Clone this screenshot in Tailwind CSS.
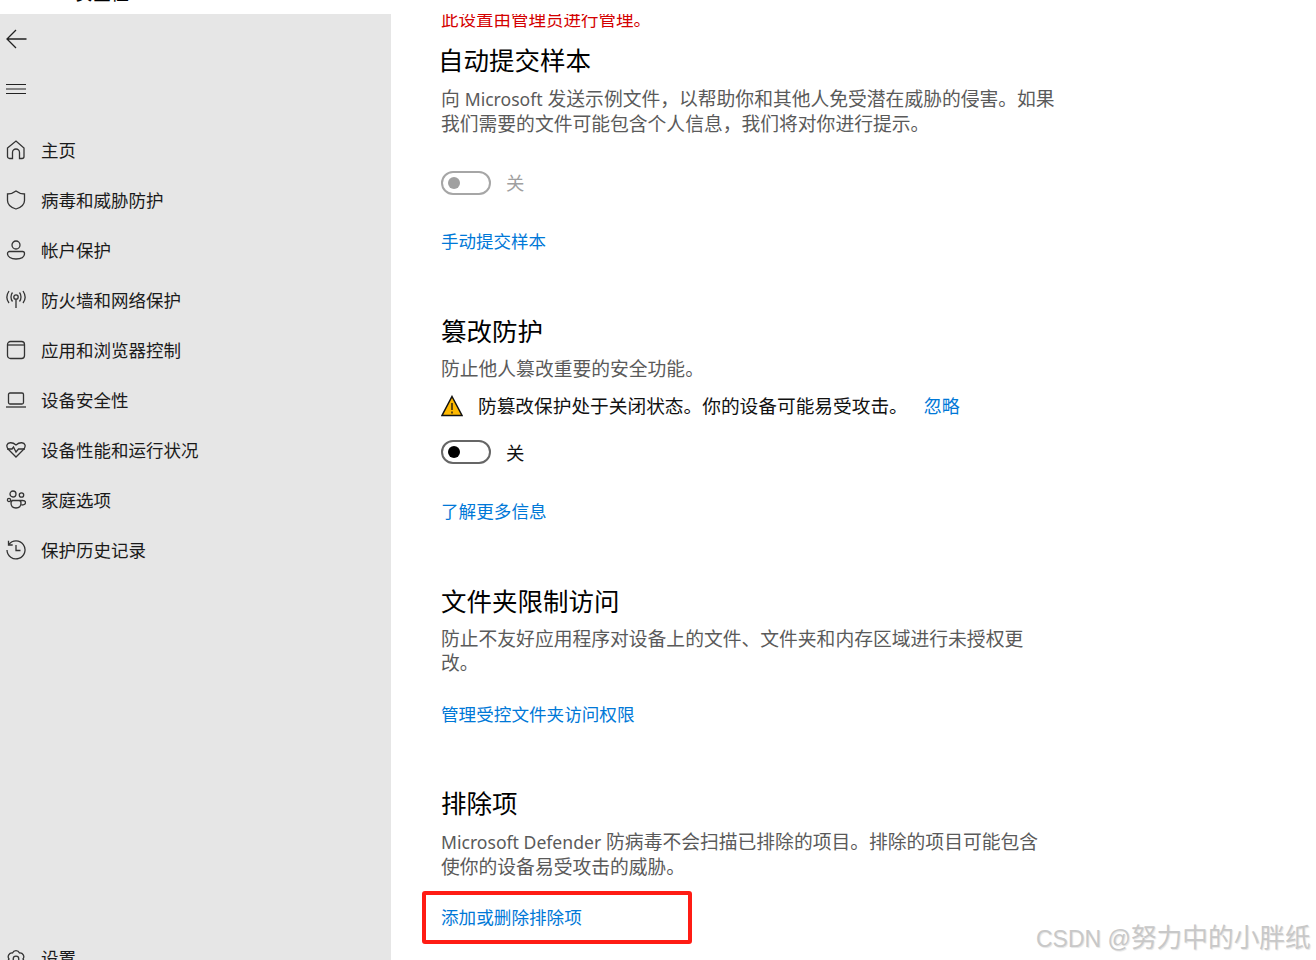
<!DOCTYPE html>
<html lang="zh-CN">
<head>
  <meta charset="UTF-8">
  <title>Windows 安全中心</title>
  <script src="https://cdn.jsdelivr.net/npm/@tailwindcss/browser@4"></script>
</head>
<body class="bg-white overflow-hidden font-['Noto_Sans','Noto_Sans_CJK_SC',sans-serif]">
  <div class="relative flex flex-col h-[960px] w-[1316px] overflow-hidden">
    <!-- top edge, title is cut off by the crop -->
    <div class="h-[14px] overflow-hidden pl-[75px]">
      <div class="-mt-[19px] text-[18px] leading-[24px] text-black">安全性</div>
    </div>

    <div class="flex flex-1 min-h-0">
      <!-- sidebar -->
      <aside class="w-[391px] shrink-0 bg-[#e6e6e6] flex flex-col text-[#1a1a1a] overflow-hidden">
        <div class="h-[50px] flex items-center pl-[6px]">
          <svg class="w-[21px] h-[20px]" viewBox="0 0 21 20" fill="none" stroke="#222" stroke-width="1.3"><path d="M20.500 10H1M10 1 1 10l9 9"/></svg>
        </div>
        <div class="h-[50px] flex items-center pl-[6px]">
          <svg class="w-[20px] h-[12px]" viewBox="0 0 20 12" fill="none" stroke="#222" stroke-width="1"><path d="M0 1.500h20M0 6h20M0 10.500h20"/></svg>
        </div>
        <nav class="mt-[11px] text-[17.5px]">
          <div class="h-[50px] flex items-center pl-[6px] gap-[15px]">
            <svg class="w-[20px] h-[20px] shrink-0" viewBox="0 0 20 20" fill="none" stroke="#333" stroke-width="1.3"><path d="M1.500 8 10 1l8 7v8.500a2 2 0 0 1-2 2h-2.500v-6a3.500 3.500 0 0 0-7 0v6H3.500a2 2 0 0 1-2-2z"/></svg>
            <span>主页</span>
          </div>
          <div class="h-[50px] flex items-center pl-[6px] gap-[15px]">
            <svg class="w-[20px] h-[20px] shrink-0" viewBox="0 0 20 20" fill="none" stroke="#333" stroke-width="1.3"><path d="M10 1c2.500 2 5 3 8.500 3v6.500c0 4-3.500 7-8.500 8.500-5-1.500-8.500-4.500-8.500-8.500V4C5 4 7.500 3 10 1z"/></svg>
            <span>病毒和威胁防护</span>
          </div>
          <div class="h-[50px] flex items-center pl-[6px] gap-[15px]">
            <svg class="w-[20px] h-[20px] shrink-0" viewBox="0 0 20 20" fill="none" stroke="#333" stroke-width="1.3"><circle cx="10" cy="5" r="4"/><path d="M3.500 11.500h13a2 2 0 0 1 2 2c0 3.500-3.500 5.500-8.500 5.500s-8.500-2-8.500-5.500a2 2 0 0 1 2-2z"/></svg>
            <span>帐户保护</span>
          </div>
          <div class="h-[50px] flex items-center pl-[6px] gap-[15px]">
            <svg class="w-[20px] h-[20px] shrink-0" viewBox="0 0 20 20" fill="none" stroke="#333" stroke-width="1.3"><circle cx="10" cy="7" r="2.200"/><path d="M10 9.200V18M6.500 2.500C4.500 5 4.500 9 6.500 11.500M13.500 2.500c2 2.500 2 6.500 0 9M3 1C.3 5 .3 9.500 3 13M17 1c2.700 4 2.700 8.500 0 12"/></svg>
            <span>防火墙和网络保护</span>
          </div>
          <div class="h-[50px] flex items-center pl-[6px] gap-[15px]">
            <svg class="w-[20px] h-[20px] shrink-0" viewBox="0 0 20 20" fill="none" stroke="#333" stroke-width="1.3"><rect x="1.500" y="1.500" width="17" height="17" rx="3"/><path d="M1.500 5h17"/></svg>
            <span>应用和浏览器控制</span>
          </div>
          <div class="h-[50px] flex items-center pl-[6px] gap-[15px]">
            <svg class="w-[20px] h-[20px] shrink-0" viewBox="0 0 20 20" fill="none" stroke="#333" stroke-width="1.3"><rect x="2.500" y="3" width="15" height="11" rx="1.500"/><path d="M0 17h20"/></svg>
            <span>设备安全性</span>
          </div>
          <div class="h-[50px] flex items-center pl-[6px] gap-[15px]">
            <svg class="w-[20px] h-[20px] shrink-0" viewBox="0 0 20 20" fill="none" stroke="#333" stroke-width="1.3"><path d="M3 10C1 8 .5 6.500 1 5c.8-2.500 5-3.500 9 0 4-3.500 8.200-2.500 9 0 .5 1.500 0 3-2 5l-7 7z"/><path d="M1 9h5l1.500-2L10 12l2.500-3H19"/></svg>
            <span>设备性能和运行状况</span>
          </div>
          <div class="h-[50px] flex items-center pl-[6px] gap-[15px]">
            <svg class="w-[20px] h-[20px] shrink-0" viewBox="0 0 20 20" fill="none" stroke="#333" stroke-width="1.3"><circle cx="7" cy="4" r="3"/><circle cx="15.500" cy="5" r="2.200"/><circle cx="3" cy="10" r="1.600"/><path d="M5.500 10.500h11c1.500 0 3 .8 3 2 0 1.500-2 2.500-4 2.500M5 13c0-1.500 1-2.500 2-2.500h6c1.500 0 2 1 2 2.500 0 3-2 5-5 5s-5-2-5-5z"/></svg>
            <span>家庭选项</span>
          </div>
          <div class="h-[50px] flex items-center pl-[6px] gap-[15px]">
            <svg class="w-[20px] h-[20px] shrink-0" viewBox="0 0 20 20" fill="none" stroke="#333" stroke-width="1.3"><path d="M2.800 4.500A9 9 0 1 1 1 10"/><path d="M2.500 .8v4.200h4.200M10 5v5.500h4.500"/></svg>
            <span>保护历史记录</span>
          </div>
        </nav>
        <div class="mt-auto -mb-[23px] h-[50px] flex items-center pl-[6px] gap-[15px] text-[17.5px]">
          <svg class="w-[20px] h-[20px] shrink-0" viewBox="0 0 20 20" fill="none" stroke="#333" stroke-width="1.3"><path d="M6.500 4.940A3.800 3.800 0 0 1 13.500 4.940 3.800 3.800 0 0 1 17 11 3.800 3.800 0 0 1 13.500 17.060 3.800 3.800 0 0 1 6.500 17.060 3.800 3.800 0 0 1 3 11 3.800 3.800 0 0 1 6.500 4.940z"/><circle cx="10" cy="11" r="2.800"/></svg>
          <span>设置</span>
        </div>
      </aside>

      <!-- settings content -->
      <main class="flex-1 min-w-0 pl-[50px] overflow-hidden">
        <p class="-mt-[9px] text-[17.5px] leading-[28px] text-[#d40000]">此设置由管理员进行管理。</p>

        <h2 class="-ml-[3px] mt-[7px] text-[25.5px] leading-[40px] text-black">自动提交样本</h2>
        <p class="mt-[7px] w-[625px] text-[18.8px] leading-[25px] text-[#5a5a5a]">向 <span class="text-[17.6px]">Microsoft</span> 发送示例文件，以帮助你和其他人免受潜在威胁的侵害。如果我们需要的文件可能包含个人信息，我们将对你进行提示。</p>
        <div class="mt-[32px] flex items-center gap-[15px] text-[18.4px] text-[#a0a0a0]">
          <span class="w-[50px] h-[24px] rounded-full border-2 border-[#a6a6a6] flex items-center pl-[5px]"><span class="w-[12px] h-[12px] rounded-full bg-[#a0a0a0]"></span></span>
          <span>关</span>
        </div>
        <a class="block mt-[29px] text-[17.5px] leading-[30px] text-[#0078d7]">手动提交样本</a>

        <h2 class="mt-[55px] text-[25.5px] leading-[40px] text-black">篡改防护</h2>
        <p class="mt-[6px] text-[18.8px] leading-[25px] text-[#5a5a5a]">防止他人篡改重要的安全功能。</p>
        <div class="mt-[12px] flex items-center h-[25px] text-[18.7px] text-[#111]">
          <svg class="w-[22px] h-[22px] shrink-0" viewBox="0 0 22 22"><path d="M11 1.500 21 20.500H1z" fill="#ffb900" stroke="#111" stroke-width="1.500"/><path d="M11 8v7M11 16.500v2" stroke="#111" stroke-width="1.300"/></svg>
          <span class="ml-[15px]">防篡改保护处于关闭状态。你的设备可能易受攻击。</span>
          <a class="ml-[16px] text-[#0078d7] text-[18px]">忽略</a>
        </div>
        <div class="mt-[20px] flex items-center gap-[15px] text-[18.4px] text-[#111]">
          <span class="w-[50px] h-[24px] rounded-full border-2 border-[#666] flex items-center pl-[5px]"><span class="w-[12px] h-[12px] rounded-full bg-black"></span></span>
          <span>关</span>
        </div>
        <a class="block mt-[30px] text-[17.6px] leading-[30px] text-[#0078d7]">了解更多信息</a>

        <h2 class="mt-[55px] text-[25.5px] leading-[40px] text-black">文件夹限制访问</h2>
        <p class="mt-[6px] w-[600px] text-[18.8px] leading-[24px] text-[#5a5a5a]">防止不友好应用程序对设备上的文件、文件夹和内存区域进行未授权更改。</p>
        <a class="block mt-[24px] text-[17.6px] leading-[30px] text-[#0078d7]">管理受控文件夹访问权限</a>

        <h2 class="mt-[54px] text-[25.5px] leading-[40px] text-black">排除项</h2>
        <p class="mt-[7px] w-[600px] text-[18.8px] leading-[25px] text-[#5a5a5a]"><span class="text-[17.6px]">Microsoft Defender</span> 防病毒不会扫描已排除的项目。排除的项目可能包含使你的设备易受攻击的威胁。</p>
        <a class="block mt-[22px] text-[17.6px] leading-[30px] text-[#0078d7]">添加或删除排除项</a>
      </main>
    </div>

    <!-- red annotation box over the link -->
    <div class="absolute left-[422px] top-[891px] w-[270px] h-[53px] rounded-[3px] border-[4px] border-[#ff1c14]"></div>
    <!-- blog watermark -->
    <div class="absolute left-[1036px] top-[920px] text-[23px] leading-[36px] whitespace-nowrap text-[#c8c8c8] [text-shadow:1px_1px_1px_#e4e4e4] font-['Liberation_Sans','Noto_Sans_CJK_SC',sans-serif]">CSDN @<span class="text-[25.7px]">努力中的小胖纸</span></div>
  </div>
</body>
</html>
